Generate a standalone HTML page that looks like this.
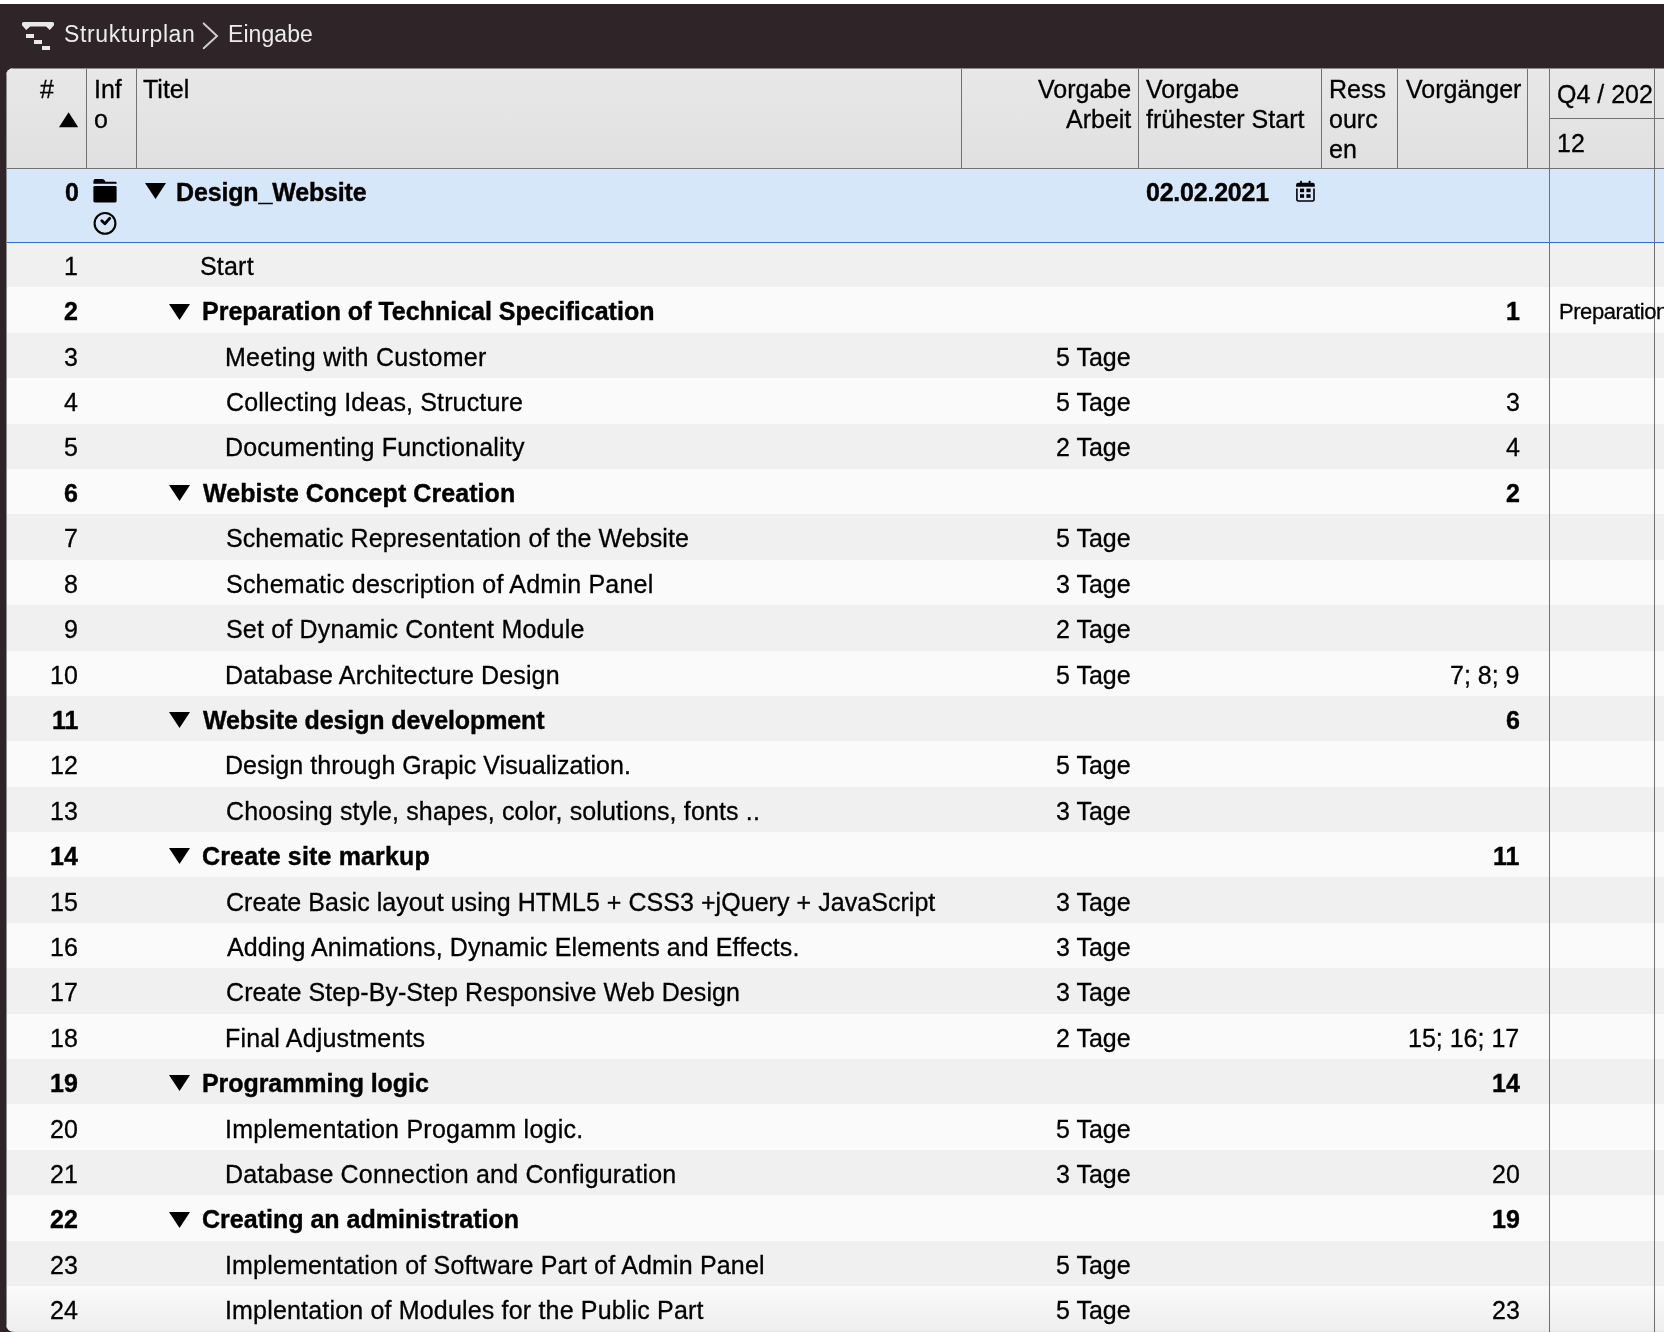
<!DOCTYPE html>
<html><head><meta charset="utf-8"><style>
html,body{margin:0;padding:0;}
body{width:1664px;height:1332px;position:relative;overflow:hidden;background:#fff;font-family:'Liberation Sans',sans-serif;}
.t{position:absolute;white-space:pre;line-height:30px;will-change:transform;font-family:'Liberation Sans',sans-serif;}
.abs{position:absolute;}
</style></head><body>

<div class="abs" style="left:0;top:4px;width:1664px;height:1328px;background:#2f2428;"></div>
<svg class="abs" style="left:0;top:0" width="80" height="68" viewBox="0 0 80 68">
<path d="M23.5 22 H52.5 Q54 22 54 23.5 V25.3 L49.8 30 L46 26.4 H30.2 L26.2 30 L22 25.3 V23.5 Q22 22 23.5 22 Z" fill="#e8e8e8"/>
<rect x="26" y="34" width="8" height="4" fill="#e8e8e8"/>
<rect x="34" y="40" width="8" height="4" fill="#e8e8e8"/>
<rect x="42" y="46" width="8" height="4" fill="#e8e8e8"/>
</svg>
<div class="t" style="left:63.50px;top:19.03px;font-size:23px;color:#ececec;letter-spacing:0.62px;">Strukturplan</div>
<svg class="abs" style="left:200px;top:20px" width="20" height="32" viewBox="0 0 20 32"><path d="M3.7 3.4 L17 16 L3.7 28.3" fill="none" stroke="#d0cccd" stroke-width="2" stroke-linecap="round"/></svg>
<div class="t" style="left:227.50px;top:19.03px;font-size:23px;color:#ececec;letter-spacing:0.08px;">Eingabe</div>
<div class="abs" id="panel" style="left:6px;top:68px;width:1700px;height:1264px;border-radius:8px;overflow:hidden;background:#f0f0f0;">
<div class="abs" style="left:0;top:0;width:1700px;height:100px;background:linear-gradient(#e8e8e8,#e0e0e0);"></div>
<div class="abs" style="left:80.0px;top:0;width:1px;height:100px;background:#727272;"></div>
<div class="abs" style="left:130.0px;top:0;width:1px;height:100px;background:#727272;"></div>
<div class="abs" style="left:955.0px;top:0;width:1px;height:100px;background:#727272;"></div>
<div class="abs" style="left:1132.0px;top:0;width:1px;height:100px;background:#727272;"></div>
<div class="abs" style="left:1315.0px;top:0;width:1px;height:100px;background:#727272;"></div>
<div class="abs" style="left:1390.7px;top:0;width:1px;height:100px;background:#727272;"></div>
<div class="abs" style="left:1521.0px;top:0;width:1px;height:100px;background:#727272;"></div>
<div class="abs" style="left:1543.5px;top:50px;width:200px;height:1px;background:#727272;"></div>
<div class="abs" style="left:0;top:100.00px;width:1700px;height:74.00px;background:#d6e7f9;"></div>
<div class="abs" style="left:0;top:174.00px;width:1700px;height:45.39px;background:#f0f0f0;"></div>
<div class="abs" style="left:0;top:219.39px;width:1700px;height:45.39px;background:#fafafa;"></div>
<div class="abs" style="left:0;top:264.78px;width:1700px;height:45.39px;background:#f0f0f0;"></div>
<div class="abs" style="left:0;top:310.17px;width:1700px;height:45.39px;background:#fafafa;"></div>
<div class="abs" style="left:0;top:355.56px;width:1700px;height:45.39px;background:#f0f0f0;"></div>
<div class="abs" style="left:0;top:400.95px;width:1700px;height:45.39px;background:#fafafa;"></div>
<div class="abs" style="left:0;top:446.34px;width:1700px;height:45.39px;background:#f0f0f0;"></div>
<div class="abs" style="left:0;top:491.73px;width:1700px;height:45.39px;background:#fafafa;"></div>
<div class="abs" style="left:0;top:537.12px;width:1700px;height:45.39px;background:#f0f0f0;"></div>
<div class="abs" style="left:0;top:582.51px;width:1700px;height:45.39px;background:#fafafa;"></div>
<div class="abs" style="left:0;top:627.90px;width:1700px;height:45.39px;background:#f0f0f0;"></div>
<div class="abs" style="left:0;top:673.29px;width:1700px;height:45.39px;background:#fafafa;"></div>
<div class="abs" style="left:0;top:718.68px;width:1700px;height:45.39px;background:#f0f0f0;"></div>
<div class="abs" style="left:0;top:764.07px;width:1700px;height:45.39px;background:#fafafa;"></div>
<div class="abs" style="left:0;top:809.46px;width:1700px;height:45.39px;background:#f0f0f0;"></div>
<div class="abs" style="left:0;top:854.85px;width:1700px;height:45.39px;background:#fafafa;"></div>
<div class="abs" style="left:0;top:900.24px;width:1700px;height:45.39px;background:#f0f0f0;"></div>
<div class="abs" style="left:0;top:945.63px;width:1700px;height:45.39px;background:#fafafa;"></div>
<div class="abs" style="left:0;top:991.02px;width:1700px;height:45.39px;background:#f0f0f0;"></div>
<div class="abs" style="left:0;top:1036.41px;width:1700px;height:45.39px;background:#fafafa;"></div>
<div class="abs" style="left:0;top:1081.80px;width:1700px;height:45.39px;background:#f0f0f0;"></div>
<div class="abs" style="left:0;top:1127.19px;width:1700px;height:45.39px;background:#fafafa;"></div>
<div class="abs" style="left:0;top:1172.58px;width:1700px;height:45.39px;background:#f0f0f0;"></div>
<div class="abs" style="left:0;top:1217.97px;width:1700px;height:45.39px;background:#fafafa;"></div>
<div class="abs" style="left:0;top:174.00px;width:1700px;height:1px;background:#2b6fdc;"></div>
<div class="abs" style="left:1543.0px;top:0;width:1px;height:1300px;background:#727272;"></div>
<div class="abs" style="left:1647.9px;top:0;width:1px;height:1300px;background:#727272;"></div>
<div class="abs" style="left:0;top:100px;width:1700px;height:1px;background:#6f6f6f;"></div>
<div class="abs" style="left:0;top:0;width:1700px;height:1px;background:#8c8a8b;"></div>
<div class="abs" style="left:0;top:0;width:1px;height:1300px;background:#8c8a8b;"></div>
<div class="abs" style="left:0;top:1218px;width:1700px;height:46px;background:linear-gradient(rgba(0,0,0,0),rgba(0,0,0,0.05));"></div>
</div>
<div class="t" style="left:40.00px;top:74.34px;font-size:25px;-webkit-text-stroke:0.3px #000;color:#000;">#</div>
<svg class="abs" style="left:58px;top:111px" width="22" height="18" viewBox="0 0 22 18"><path d="M1 16.2 L10.6 1.2 L20.2 16.2 Z" fill="#000"/></svg>
<div class="t" style="left:94.00px;top:74.34px;font-size:25px;-webkit-text-stroke:0.3px #000;color:#000;">Inf</div>
<div class="t" style="left:94.00px;top:104.34px;font-size:25px;-webkit-text-stroke:0.3px #000;color:#000;">o</div>
<div class="t" style="left:143.00px;top:74.34px;font-size:25px;-webkit-text-stroke:0.3px #000;color:#000;">Titel</div>
<div class="t" style="right:533.00px;top:74.34px;font-size:25px;-webkit-text-stroke:0.3px #000;color:#000;">Vorgabe</div>
<div class="t" style="right:533.00px;top:104.34px;font-size:25px;-webkit-text-stroke:0.3px #000;color:#000;">Arbeit</div>
<div class="t" style="left:1146.00px;top:74.34px;font-size:25px;-webkit-text-stroke:0.3px #000;color:#000;">Vorgabe</div>
<div class="t" style="left:1146.00px;top:104.34px;font-size:25px;-webkit-text-stroke:0.3px #000;color:#000;">frühester Start</div>
<div class="t" style="left:1329.00px;top:74.34px;font-size:25px;-webkit-text-stroke:0.3px #000;color:#000;">Ress</div>
<div class="t" style="left:1329.00px;top:104.34px;font-size:25px;-webkit-text-stroke:0.3px #000;color:#000;">ourc</div>
<div class="t" style="left:1329.00px;top:134.34px;font-size:25px;-webkit-text-stroke:0.3px #000;color:#000;">en</div>
<div class="t" style="left:1406.00px;top:74.34px;font-size:25px;-webkit-text-stroke:0.3px #000;color:#000;">Vorgänger</div>
<div class="abs" style="left:1550px;top:68px;width:104px;height:50px;overflow:hidden"><div class="t" style="left:7.00px;top:11.34px;font-size:25px;-webkit-text-stroke:0.3px #000;color:#000;">Q4 / 2021</div></div>
<div class="t" style="left:1557.00px;top:128.34px;font-size:25px;-webkit-text-stroke:0.3px #000;color:#000;">12</div>
<div class="t" style="right:1585.00px;top:176.64px;font-size:25px;font-weight:700;-webkit-text-stroke:0.4px #000;color:#000;">0</div>
<svg class="abs" style="left:92px;top:178px" width="26" height="60" viewBox="0 0 26 60">
<path d="M1.4 5.8 V3.2 Q1.4 1.1 3.5 1.1 H10.5 Q12 1.1 12.8 2.6 L13.4 3.7 H23.5 Q24.6 3.7 24.6 4.8 V5.8 Z" fill="#000"/>
<rect x="1.4" y="7.9" width="23.2" height="16.6" rx="1.4" fill="#000"/>
<circle cx="13" cy="45.4" r="10.4" fill="none" stroke="#000" stroke-width="2.1"/>
<path d="M9.8 42.7 L12.9 45.7 L17.7 40.3" fill="none" stroke="#000" stroke-width="2.8" stroke-linecap="round" stroke-linejoin="round"/>
</svg>
<svg class="abs" style="left:143.5px;top:182.0px" width="23" height="18" viewBox="0 0 23 18"><path d="M1 1 L22 1 L11.5 17 Z" fill="#000"/></svg>
<div class="t" style="left:175.90px;top:176.64px;font-size:25px;font-weight:700;-webkit-text-stroke:0.4px #000;color:#000;letter-spacing:-0.154px;">Design_Website</div>
<div class="t" style="left:1145.50px;top:176.64px;font-size:25px;font-weight:700;-webkit-text-stroke:0.4px #000;color:#000;letter-spacing:-0.22px;">02.02.2021</div>
<svg class="abs" style="left:1294px;top:179px" width="24" height="26" viewBox="0 0 24 26">
<rect x="6.1" y="1.8" width="1.8" height="3" rx="0.5" fill="#000"/>
<rect x="14.7" y="1.8" width="1.8" height="3" rx="0.5" fill="#000"/>
<path d="M2.1 7.7 V6 Q2.1 3.8 4.3 3.8 H18.6 Q20.8 3.8 20.8 6 V7.7 Z" fill="#000"/>
<path d="M2.9 9.6 V20.3 Q2.9 22 4.6 22 H18.3 Q20 22 20 20.3 V9.6" fill="none" stroke="#000" stroke-width="1.6"/>
<rect x="6" y="9.6" width="4.1" height="3.6" fill="#000"/>
<rect x="12.4" y="9.6" width="4.2" height="3.6" fill="#000"/>
<rect x="6" y="15.2" width="4.1" height="3.6" fill="#000"/>
<rect x="12.4" y="15.2" width="4.2" height="3.6" fill="#000"/>
</svg>
<div class="t" style="right:1586.00px;top:250.84px;font-size:25px;-webkit-text-stroke:0.3px #000;color:#000;">1</div>
<div class="t" style="left:200.40px;top:250.84px;font-size:25px;-webkit-text-stroke:0.3px #000;color:#000;letter-spacing:0.200px;">Start</div>
<div class="t" style="right:1586.00px;top:296.25px;font-size:25px;font-weight:700;-webkit-text-stroke:0.4px #000;color:#000;">2</div>
<svg class="abs" style="left:168.4px;top:302.7px" width="23" height="18" viewBox="0 0 23 18"><path d="M1 1 L22 1 L11.5 17 Z" fill="#000"/></svg>
<div class="t" style="left:202.00px;top:296.25px;font-size:25px;font-weight:700;-webkit-text-stroke:0.4px #000;color:#000;">Preparation of Technical Specification</div>
<div class="t" style="right:144.50px;top:296.25px;font-size:25px;font-weight:700;-webkit-text-stroke:0.4px #000;color:#000;">1</div>
<div class="t" style="left:1559.00px;top:296.79px;font-size:22px;-webkit-text-stroke:0.3px #000;color:#000;letter-spacing:-0.45px;">Preparation of Technical Specification</div>
<div class="t" style="right:1586.00px;top:341.66px;font-size:25px;-webkit-text-stroke:0.3px #000;color:#000;">3</div>
<div class="t" style="left:225.00px;top:341.66px;font-size:25px;-webkit-text-stroke:0.3px #000;color:#000;letter-spacing:0.285px;">Meeting with Customer</div>
<div class="t" style="right:533.00px;top:341.66px;font-size:25px;-webkit-text-stroke:0.3px #000;color:#000;">5 Tage</div>
<div class="t" style="right:1586.00px;top:387.07px;font-size:25px;-webkit-text-stroke:0.3px #000;color:#000;">4</div>
<div class="t" style="left:226.00px;top:387.07px;font-size:25px;-webkit-text-stroke:0.3px #000;color:#000;letter-spacing:0.138px;">Collecting Ideas, Structure</div>
<div class="t" style="right:533.00px;top:387.07px;font-size:25px;-webkit-text-stroke:0.3px #000;color:#000;">5 Tage</div>
<div class="t" style="right:144.50px;top:387.07px;font-size:25px;-webkit-text-stroke:0.3px #000;color:#000;">3</div>
<div class="t" style="right:1586.00px;top:432.48px;font-size:25px;-webkit-text-stroke:0.3px #000;color:#000;">5</div>
<div class="t" style="left:225.00px;top:432.48px;font-size:25px;-webkit-text-stroke:0.3px #000;color:#000;letter-spacing:0.204px;">Documenting Functionality</div>
<div class="t" style="right:533.00px;top:432.48px;font-size:25px;-webkit-text-stroke:0.3px #000;color:#000;">2 Tage</div>
<div class="t" style="right:144.50px;top:432.48px;font-size:25px;-webkit-text-stroke:0.3px #000;color:#000;">4</div>
<div class="t" style="right:1586.00px;top:477.89px;font-size:25px;font-weight:700;-webkit-text-stroke:0.4px #000;color:#000;">6</div>
<svg class="abs" style="left:168.4px;top:484.2px" width="23" height="18" viewBox="0 0 23 18"><path d="M1 1 L22 1 L11.5 17 Z" fill="#000"/></svg>
<div class="t" style="left:202.50px;top:477.89px;font-size:25px;font-weight:700;-webkit-text-stroke:0.4px #000;color:#000;letter-spacing:0.065px;">Webiste Concept Creation</div>
<div class="t" style="right:144.50px;top:477.89px;font-size:25px;font-weight:700;-webkit-text-stroke:0.4px #000;color:#000;">2</div>
<div class="t" style="right:1586.00px;top:523.30px;font-size:25px;-webkit-text-stroke:0.3px #000;color:#000;">7</div>
<div class="t" style="left:226.00px;top:523.30px;font-size:25px;-webkit-text-stroke:0.3px #000;color:#000;letter-spacing:0.089px;">Schematic Representation of the Website</div>
<div class="t" style="right:533.00px;top:523.30px;font-size:25px;-webkit-text-stroke:0.3px #000;color:#000;">5 Tage</div>
<div class="t" style="right:1586.00px;top:568.71px;font-size:25px;-webkit-text-stroke:0.3px #000;color:#000;">8</div>
<div class="t" style="left:226.00px;top:568.71px;font-size:25px;-webkit-text-stroke:0.3px #000;color:#000;letter-spacing:0.217px;">Schematic description of Admin Panel</div>
<div class="t" style="right:533.00px;top:568.71px;font-size:25px;-webkit-text-stroke:0.3px #000;color:#000;">3 Tage</div>
<div class="t" style="right:1586.00px;top:614.12px;font-size:25px;-webkit-text-stroke:0.3px #000;color:#000;">9</div>
<div class="t" style="left:226.00px;top:614.12px;font-size:25px;-webkit-text-stroke:0.3px #000;color:#000;letter-spacing:0.193px;">Set of Dynamic Content Module</div>
<div class="t" style="right:533.00px;top:614.12px;font-size:25px;-webkit-text-stroke:0.3px #000;color:#000;">2 Tage</div>
<div class="t" style="right:1586.00px;top:659.53px;font-size:25px;-webkit-text-stroke:0.3px #000;color:#000;">10</div>
<div class="t" style="left:225.00px;top:659.53px;font-size:25px;-webkit-text-stroke:0.3px #000;color:#000;letter-spacing:0.141px;">Database Architecture Design</div>
<div class="t" style="right:533.00px;top:659.53px;font-size:25px;-webkit-text-stroke:0.3px #000;color:#000;">5 Tage</div>
<div class="t" style="right:144.50px;top:659.53px;font-size:25px;-webkit-text-stroke:0.3px #000;color:#000;">7; 8; 9</div>
<div class="t" style="right:1586.00px;top:704.94px;font-size:25px;font-weight:700;-webkit-text-stroke:0.4px #000;color:#000;">11</div>
<svg class="abs" style="left:168.4px;top:711.2px" width="23" height="18" viewBox="0 0 23 18"><path d="M1 1 L22 1 L11.5 17 Z" fill="#000"/></svg>
<div class="t" style="left:202.50px;top:704.94px;font-size:25px;font-weight:700;-webkit-text-stroke:0.4px #000;color:#000;letter-spacing:-0.100px;">Website design development</div>
<div class="t" style="right:144.50px;top:704.94px;font-size:25px;font-weight:700;-webkit-text-stroke:0.4px #000;color:#000;">6</div>
<div class="t" style="right:1586.00px;top:750.35px;font-size:25px;-webkit-text-stroke:0.3px #000;color:#000;">12</div>
<div class="t" style="left:225.00px;top:750.35px;font-size:25px;-webkit-text-stroke:0.3px #000;color:#000;letter-spacing:0.057px;">Design through Grapic Visualization.</div>
<div class="t" style="right:533.00px;top:750.35px;font-size:25px;-webkit-text-stroke:0.3px #000;color:#000;">5 Tage</div>
<div class="t" style="right:1586.00px;top:795.76px;font-size:25px;-webkit-text-stroke:0.3px #000;color:#000;">13</div>
<div class="t" style="left:226.00px;top:795.76px;font-size:25px;-webkit-text-stroke:0.3px #000;color:#000;letter-spacing:0.147px;">Choosing style, shapes, color, solutions, fonts ..</div>
<div class="t" style="right:533.00px;top:795.76px;font-size:25px;-webkit-text-stroke:0.3px #000;color:#000;">3 Tage</div>
<div class="t" style="right:1586.00px;top:841.17px;font-size:25px;font-weight:700;-webkit-text-stroke:0.4px #000;color:#000;">14</div>
<svg class="abs" style="left:168.4px;top:847.4px" width="23" height="18" viewBox="0 0 23 18"><path d="M1 1 L22 1 L11.5 17 Z" fill="#000"/></svg>
<div class="t" style="left:201.50px;top:841.17px;font-size:25px;font-weight:700;-webkit-text-stroke:0.4px #000;color:#000;letter-spacing:0.153px;">Create site markup</div>
<div class="t" style="right:144.50px;top:841.17px;font-size:25px;font-weight:700;-webkit-text-stroke:0.4px #000;color:#000;">11</div>
<div class="t" style="right:1586.00px;top:886.58px;font-size:25px;-webkit-text-stroke:0.3px #000;color:#000;">15</div>
<div class="t" style="left:226.00px;top:886.58px;font-size:25px;-webkit-text-stroke:0.3px #000;color:#000;letter-spacing:0.047px;">Create Basic layout using HTML5 + CSS3 +jQuery + JavaScript</div>
<div class="t" style="right:533.00px;top:886.58px;font-size:25px;-webkit-text-stroke:0.3px #000;color:#000;">3 Tage</div>
<div class="t" style="right:1586.00px;top:931.99px;font-size:25px;-webkit-text-stroke:0.3px #000;color:#000;">16</div>
<div class="t" style="left:227.00px;top:931.99px;font-size:25px;-webkit-text-stroke:0.3px #000;color:#000;letter-spacing:0.096px;">Adding Animations, Dynamic Elements and Effects.</div>
<div class="t" style="right:533.00px;top:931.99px;font-size:25px;-webkit-text-stroke:0.3px #000;color:#000;">3 Tage</div>
<div class="t" style="right:1586.00px;top:977.40px;font-size:25px;-webkit-text-stroke:0.3px #000;color:#000;">17</div>
<div class="t" style="left:226.00px;top:977.40px;font-size:25px;-webkit-text-stroke:0.3px #000;color:#000;letter-spacing:0.075px;">Create Step-By-Step Responsive Web Design</div>
<div class="t" style="right:533.00px;top:977.40px;font-size:25px;-webkit-text-stroke:0.3px #000;color:#000;">3 Tage</div>
<div class="t" style="right:1586.00px;top:1022.81px;font-size:25px;-webkit-text-stroke:0.3px #000;color:#000;">18</div>
<div class="t" style="left:225.00px;top:1022.81px;font-size:25px;-webkit-text-stroke:0.3px #000;color:#000;letter-spacing:0.175px;">Final Adjustments</div>
<div class="t" style="right:533.00px;top:1022.81px;font-size:25px;-webkit-text-stroke:0.3px #000;color:#000;">2 Tage</div>
<div class="t" style="right:144.50px;top:1022.81px;font-size:25px;-webkit-text-stroke:0.3px #000;color:#000;">15; 16; 17</div>
<div class="t" style="right:1586.00px;top:1068.22px;font-size:25px;font-weight:700;-webkit-text-stroke:0.4px #000;color:#000;">19</div>
<svg class="abs" style="left:168.4px;top:1074.3px" width="23" height="18" viewBox="0 0 23 18"><path d="M1 1 L22 1 L11.5 17 Z" fill="#000"/></svg>
<div class="t" style="left:202.00px;top:1068.22px;font-size:25px;font-weight:700;-webkit-text-stroke:0.4px #000;color:#000;letter-spacing:-0.062px;">Programming logic</div>
<div class="t" style="right:144.50px;top:1068.22px;font-size:25px;font-weight:700;-webkit-text-stroke:0.4px #000;color:#000;">14</div>
<div class="t" style="right:1586.00px;top:1113.63px;font-size:25px;-webkit-text-stroke:0.3px #000;color:#000;">20</div>
<div class="t" style="left:225.00px;top:1113.63px;font-size:25px;-webkit-text-stroke:0.3px #000;color:#000;letter-spacing:0.236px;">Implementation Progamm logic.</div>
<div class="t" style="right:533.00px;top:1113.63px;font-size:25px;-webkit-text-stroke:0.3px #000;color:#000;">5 Tage</div>
<div class="t" style="right:1586.00px;top:1159.04px;font-size:25px;-webkit-text-stroke:0.3px #000;color:#000;">21</div>
<div class="t" style="left:225.00px;top:1159.04px;font-size:25px;-webkit-text-stroke:0.3px #000;color:#000;letter-spacing:0.181px;">Database Connection and Configuration</div>
<div class="t" style="right:533.00px;top:1159.04px;font-size:25px;-webkit-text-stroke:0.3px #000;color:#000;">3 Tage</div>
<div class="t" style="right:144.50px;top:1159.04px;font-size:25px;-webkit-text-stroke:0.3px #000;color:#000;">20</div>
<div class="t" style="right:1586.00px;top:1204.45px;font-size:25px;font-weight:700;-webkit-text-stroke:0.4px #000;color:#000;">22</div>
<svg class="abs" style="left:168.4px;top:1210.5px" width="23" height="18" viewBox="0 0 23 18"><path d="M1 1 L22 1 L11.5 17 Z" fill="#000"/></svg>
<div class="t" style="left:201.50px;top:1204.45px;font-size:25px;font-weight:700;-webkit-text-stroke:0.4px #000;color:#000;letter-spacing:0.012px;">Creating an administration</div>
<div class="t" style="right:144.50px;top:1204.45px;font-size:25px;font-weight:700;-webkit-text-stroke:0.4px #000;color:#000;">19</div>
<div class="t" style="right:1586.00px;top:1249.86px;font-size:25px;-webkit-text-stroke:0.3px #000;color:#000;">23</div>
<div class="t" style="left:225.00px;top:1249.86px;font-size:25px;-webkit-text-stroke:0.3px #000;color:#000;letter-spacing:0.162px;">Implementation of Software Part of Admin Panel</div>
<div class="t" style="right:533.00px;top:1249.86px;font-size:25px;-webkit-text-stroke:0.3px #000;color:#000;">5 Tage</div>
<div class="t" style="right:1586.00px;top:1295.27px;font-size:25px;-webkit-text-stroke:0.3px #000;color:#000;">24</div>
<div class="t" style="left:225.00px;top:1295.27px;font-size:25px;-webkit-text-stroke:0.3px #000;color:#000;letter-spacing:0.176px;">Implentation of Modules for the Public Part</div>
<div class="t" style="right:533.00px;top:1295.27px;font-size:25px;-webkit-text-stroke:0.3px #000;color:#000;">5 Tage</div>
<div class="t" style="right:144.50px;top:1295.27px;font-size:25px;-webkit-text-stroke:0.3px #000;color:#000;">23</div>
</body></html>
